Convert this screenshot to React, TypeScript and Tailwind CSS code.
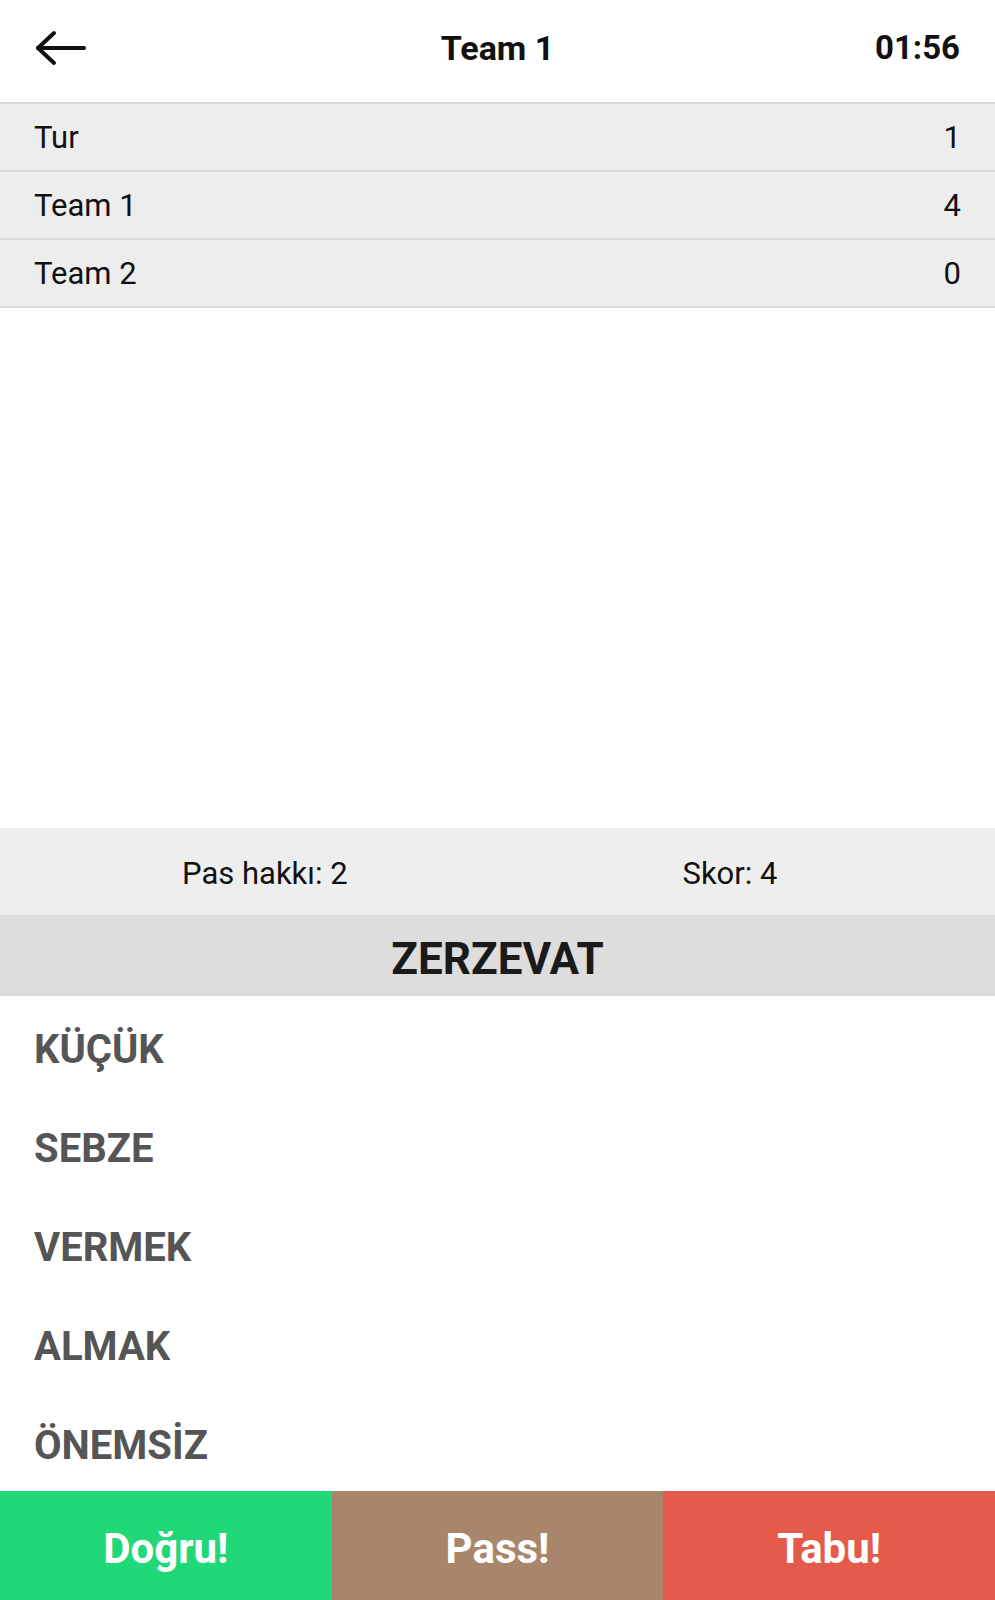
const scores = [
  { label: 'Tur', value: '1' },
  { label: 'Team 1', value: '4' },
  { label: 'Team 2', value: '0' },
];

const tabooWords = ['KÜÇÜK', 'SEBZE', 'VERMEK', 'ALMAK', 'ÖNEMSİZ'];

function BackArrow() {
  return (
    <svg width="52" height="36" viewBox="0 0 52 36" fill="none" stroke="#111" strokeWidth="4" strokeLinecap="round" strokeLinejoin="round">
      <path d="M3 18H49" />
      <path d="M19 3L3 18L19 33" />
    </svg>
  );
}

export default function App() {
  return (
    <div className="h-[1600px] flex flex-col bg-white font-['Roboto','Liberation_Sans',sans-serif] text-[#111]">
      {/* Header */}
      <header className="h-[102px] grid grid-cols-3 items-center px-[35px] pb-[6px]">
        <div className="justify-self-start">
          <BackArrow />
        </div>
        <h1 className="text-center text-[34px] font-bold">Team 1</h1>
        <div className="text-right text-[33px] font-bold">01:56</div>
      </header>

      {/* Scoreboard */}
      <div className="border-t-2 border-[#d8d8d8]">
        {scores.map((row) => (
          <div
            key={row.label}
            className="h-[68px] flex items-center justify-between px-[34px] pt-[3px] bg-[#ededed] border-b-2 border-[#d8d8d8] text-[31px]"
          >
            <span>{row.label}</span>
            <span>{row.value}</span>
          </div>
        ))}
      </div>

      <div className="flex-1" />

      {/* Status */}
      <div className="h-[87px] grid grid-cols-2 items-center pt-[5px] bg-[#eeeeee] text-[31px]">
        <span className="pl-[182px]">Pas hakkı: 2</span>
        <span className="pl-[185px]">Skor: 4</span>
      </div>

      {/* Card */}
      <div className="h-[81px] flex items-center justify-center pt-[6px] bg-[#dddddd] text-[44px] font-bold text-[#1a1a1a]">
        ZERZEVAT
      </div>
      <ul>
        {tabooWords.map((word) => (
          <li key={word} className="h-[99px] flex items-center px-[34px] pt-[8px] text-[40px] font-bold text-[#555555]">
            {word}
          </li>
        ))}
      </ul>

      {/* Actions */}
      <div className="h-[109px] grid grid-cols-3 pt-0 text-white text-[42px] font-bold">
        <button className="bg-[#20d878] pt-[6px]">Doğru!</button>
        <button className="bg-[#a8866b] pt-[6px]">Pass!</button>
        <button className="bg-[#e55a4a] pt-[6px]">Tabu!</button>
      </div>
    </div>
  );
}
